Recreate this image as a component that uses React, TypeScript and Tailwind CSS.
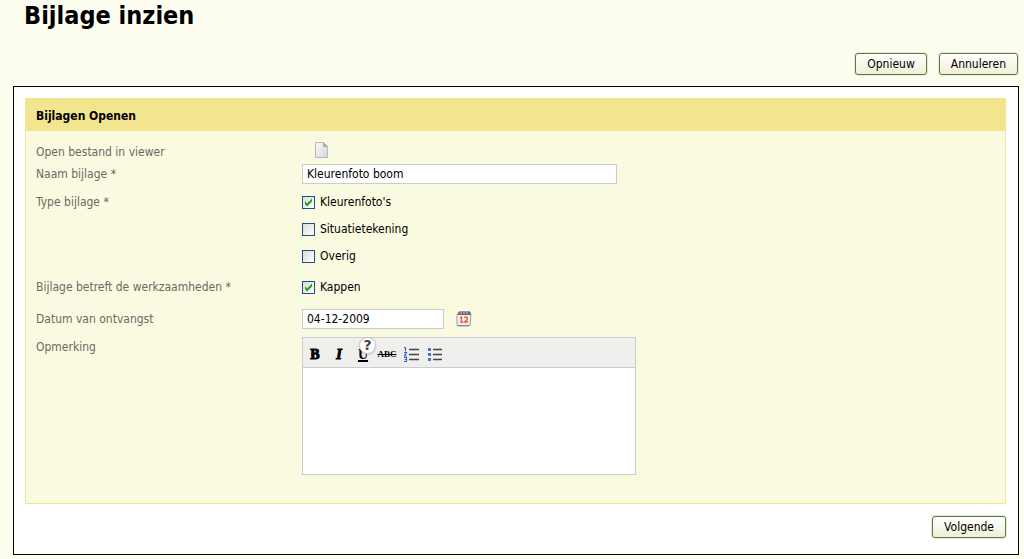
import { useState } from "react";
import type { ReactNode } from "react";

interface CheckOptionProps {
  label: string;
  checked: boolean;
  onChange: () => void;
}

interface RowProps {
  label: string;
  htmlFor?: string;
  className?: string;
  children: ReactNode;
}

const bijlageTypes = ["Kleurenfoto's", "Situatietekening", "Overig"];

function ActionButton({ children }: { children: ReactNode }) {
  return (
    <button
      type="button"
      className="h-[22px] rounded-[3px] border border-[#5b7a45] bg-linear-to-b from-white to-[#f1efd6] px-[11px] text-xs leading-5 text-black shadow-[0_0_0_1px_#e3ecd0] hover:to-[#e6e3bd]"
    >
      {children}
    </button>
  );
}

function Row({ label, htmlFor, className = "", children }: RowProps) {
  return (
    <div className={`flex items-start ${className}`}>
      <label htmlFor={htmlFor} className="w-[266px] shrink-0 leading-5 text-[#6b6b60]">
        {label}
      </label>
      <div className="min-w-0 flex-1">{children}</div>
    </div>
  );
}

function CheckOption({ label, checked, onChange }: CheckOptionProps) {
  return (
    <label className="flex h-5 w-fit items-center gap-[5px]">
      <span className="relative block size-[13px]">
        <input
          type="checkbox"
          checked={checked}
          onChange={onChange}
          className="block size-[13px] appearance-none border border-[#1c5180] bg-linear-to-br from-[#dcdcd7] to-white"
        />
        {checked && (
          <svg viewBox="0 0 13 13" className="pointer-events-none absolute inset-0 size-[13px]">
            <path d="M3 5v3l2 2.500 5-5v-3l-5 5z" fill="#21a121" />
          </svg>
        )}
      </span>
      {label}
    </label>
  );
}

function FileIcon() {
  return (
    <svg width="16" height="18" viewBox="0 0 16 18">
      <defs>
        <linearGradient id="page" x1="0" y1="0" x2="1" y2="1">
          <stop offset="0" stopColor="#fafafa" />
          <stop offset="1" stopColor="#d5d7de" />
        </linearGradient>
      </defs>
      <path d="M1.500 .5h8l4 4v11h-12z" fill="url(#page)" stroke="#b9b9b9" />
      <path d="M9.500 .5v4h4z" fill="#b5b5b5" stroke="#a8a8a8" />
    </svg>
  );
}

function CalendarIcon() {
  return (
    <svg width="16" height="16" viewBox="0 0 16 16">
      <path d="M3 1h11l1 3-1 10-1 1H2l-1-1V4z" fill="#f5efee" stroke="#9a9cc0" />
      <path d="M3 .5h11l1 3.500H1.500z" fill="#74666f" />
      <path d="M5 1v2M8 1v2M11 1v2" stroke="#c9c4cc" />
      <path d="M4 7l1.500-1v5M4 11h3M8.500 7q0-1 1.500-1t1.500 1.500q0 1-3 3.500h3.500" fill="none" stroke="#e8602a" strokeWidth="1.300" />
      <path d="M2 14.500h11" stroke="#7f88bb" />
    </svg>
  );
}

function NumberedListIcon() {
  return (
    <svg width="16" height="16" viewBox="0 0 16 16">
      <path d="M6 2.500h10M6 7.500h10M6 12.500h10" stroke="#444" strokeWidth="1.500" />
      <path d="M1 .5h1.500v4M1 5.500h2.500l-2 3.500h2.500M1 10.500h2.500v4H1M1.500 12.500h2" fill="none" stroke="#3c68c4" strokeWidth="1.200" />
    </svg>
  );
}

function BulletListIcon() {
  return (
    <svg width="16" height="16" viewBox="0 0 16 16">
      <path d="M6 2.500h9M6 7.500h9M6 12.500h9" stroke="#444" strokeWidth="1.500" />
      <path d="M1 1h3v3H1zM1 6h3v3H1zM1 11h3v3H1z" fill="#4d74b8" />
    </svg>
  );
}

function Toolbar() {
  const button = "flex h-5 w-6 items-center justify-center";

  return (
    <div className="flex h-[30px] items-center border-b border-[#ccc] bg-[#efefed] pt-1 font-['Liberation_Serif',serif] text-sm leading-none text-black">
      <button type="button" aria-label="Vet" className={`${button} font-black [-webkit-text-stroke:1px_black]`}>
        B
      </button>
      <button type="button" aria-label="Cursief" className={`${button} font-bold italic [-webkit-text-stroke:1px_black]`}>
        I
      </button>
      <button type="button" aria-label="Onderstrepen" className={`${button} relative font-bold`}>
        <span className="underline decoration-2 underline-offset-1">U</span>
        {/* help badge sits on top of the underline button */}
        <span className="absolute -top-2 left-2 flex size-[17px] items-center justify-center rounded-full border border-[#c4c4c4] bg-white font-['DejaVu_Sans',sans-serif] text-sm leading-none text-[#444] shadow-sm">
          ?
        </span>
      </button>
      <button type="button" aria-label="Doorhalen" className={`${button} text-[9px] font-bold line-through`}>
        ABC
      </button>
      <button type="button" aria-label="Genummerde lijst" className={button}>
        <NumberedListIcon />
      </button>
      <button type="button" aria-label="Opsomming" className={button}>
        <BulletListIcon />
      </button>
    </div>
  );
}

export default function App() {
  const [naam, setNaam] = useState("Kleurenfoto boom");
  const [types, setTypes] = useState<string[]>(["Kleurenfoto's"]);
  const [kappen, setKappen] = useState(true);
  const [datum, setDatum] = useState("04-12-2009");
  const [opmerking, setOpmerking] = useState("");

  const toggleType = (type: string) => {
    setTypes((prev) =>
      prev.includes(type) ? prev.filter((t) => t !== type) : [...prev, type]
    );
  };

  return (
    <main className="min-h-screen bg-[#fdfdf0] pr-[5px] pb-[3px] pl-[13px] font-[Tahoma,'DejaVu_Sans_Condensed','DejaVu_Sans',sans-serif] text-xs text-black">
      <h1 className="pl-[11px] text-[25px] leading-8 font-bold">Bijlage inzien</h1>

      <div className="mt-[21px] flex justify-end gap-3 pr-px">
        <ActionButton>Opnieuw</ActionButton>
        <ActionButton>Annuleren</ActionButton>
      </div>

      <form className="mt-[11px] border border-black bg-white pt-[11px] pr-3 pb-4 pl-[11px]" onSubmit={(e) => e.preventDefault()}>
        <section className="border border-[#f3e58d] bg-[#fafae0] pb-7">
          <h2 className="bg-[#f3e58d] px-[10px] pt-[2px] text-xs leading-[30px] font-bold">
            Bijlagen Openen
          </h2>

          <div className="px-[10px] pt-[11px]">
            <Row label="Open bestand in viewer" className="h-[22px]">
              <a href="#viewer" aria-label="Open bestand in viewer" className="ml-3 block w-4">
                <FileIcon />
              </a>
            </Row>

            <Row label="Naam bijlage *" htmlFor="naam">
              <input
                id="naam"
                type="text"
                value={naam}
                onChange={(e) => setNaam(e.target.value)}
                className="block h-5 w-full max-w-[315px] border border-[#ccc] bg-white px-1"
              />
            </Row>

            <Row label="Type bijlage *" className="mt-2">
              <div className="space-y-[7px]">
                {bijlageTypes.map((type) => (
                  <CheckOption
                    key={type}
                    label={type}
                    checked={types.includes(type)}
                    onChange={() => toggleType(type)}
                  />
                ))}
              </div>
            </Row>

            <Row label="Bijlage betreft de werkzaamheden *" className="mt-[11px]">
              <CheckOption label="Kappen" checked={kappen} onChange={() => setKappen(!kappen)} />
            </Row>

            <Row label="Datum van ontvangst" htmlFor="datum" className="mt-3">
              <div className="flex items-center gap-3">
                <input
                  id="datum"
                  type="text"
                  value={datum}
                  onChange={(e) => setDatum(e.target.value)}
                  className="block h-5 w-[142px] border border-[#ccc] bg-white px-1"
                />
                <button type="button" aria-label="Kies datum">
                  <CalendarIcon />
                </button>
              </div>
            </Row>

            <Row label="Opmerking" htmlFor="opmerking" className="mt-2">
              <div className="w-full max-w-[334px] border border-[#ccc] bg-white">
                <Toolbar />
                <textarea
                  id="opmerking"
                  value={opmerking}
                  onChange={(e) => setOpmerking(e.target.value)}
                  className="block h-[106px] w-full resize-none px-1 outline-none"
                />
              </div>
            </Row>
          </div>
        </section>

        <div className="mt-3 flex justify-end">
          <ActionButton>Volgende</ActionButton>
        </div>
      </form>
    </main>
  );
}
